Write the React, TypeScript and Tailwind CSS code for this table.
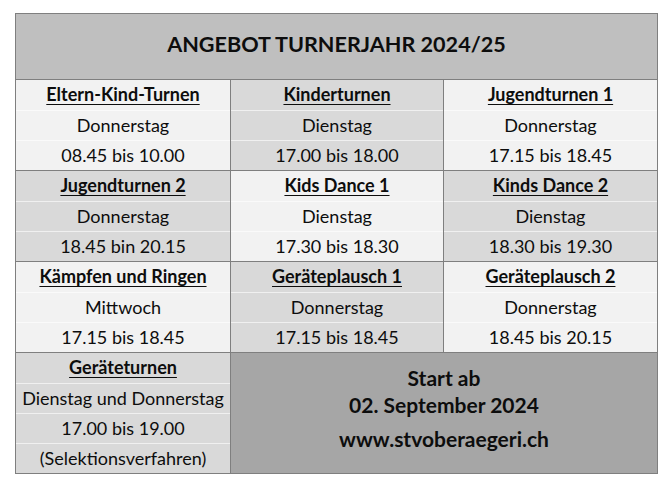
type Course = {
  name: string;
  day: string;
  time: string;
  tone: "light" | "dark";
};

const blocks: Course[][] = [
  [
    { name: "Eltern-Kind-Turnen", day: "Donnerstag", time: "08.45 bis 10.00", tone: "light" },
    { name: "Kinderturnen", day: "Dienstag", time: "17.00 bis 18.00", tone: "dark" },
    { name: "Jugendturnen 1", day: "Donnerstag", time: "17.15 bis 18.45", tone: "light" },
  ],
  [
    { name: "Jugendturnen 2", day: "Donnerstag", time: "18.45 bin 20.15", tone: "dark" },
    { name: "Kids Dance 1", day: "Dienstag", time: "17.30 bis 18.30", tone: "light" },
    { name: "Kinds Dance 2", day: "Dienstag", time: "18.30 bis 19.30", tone: "dark" },
  ],
  [
    { name: "Kämpfen und Ringen", day: "Mittwoch", time: "17.15 bis 18.45", tone: "light" },
    { name: "Geräteplausch 1", day: "Donnerstag", time: "17.15 bis 18.45", tone: "dark" },
    { name: "Geräteplausch 2", day: "Donnerstag", time: "18.45 bis 20.15", tone: "light" },
  ],
];

const Line = ({ children, first }: { children: React.ReactNode; first?: boolean }) => (
  <div
    className={
      first
        ? "h-[30px] pb-[2px] flex items-center justify-center"
        : "h-[30px] pb-[2px] flex items-center justify-center border-t border-white/60"
    }
  >
    {children}
  </div>
);

const Title = ({ children }: { children: React.ReactNode }) => (
  <span className="font-bold underline decoration-1 underline-offset-[3px]">{children}</span>
);

const CourseCell = ({ course, last }: { course: Course; last: boolean }) => (
  <div
    className={`${course.tone === "light" ? "bg-[#f2f2f2]" : "bg-[#d9d9d9]"} ${
      last ? "" : "border-r border-[#7f7f7f]"
    } border-b border-[#7f7f7f]`}
  >
    <Line first>
      <Title>{course.name}</Title>
    </Line>
    <Line>{course.day}</Line>
    <Line>{course.time}</Line>
  </div>
);

export default function App() {
  return (
    <div className="min-h-[486px] bg-white pt-[13px] pl-[15px]">
      <div
        className="w-[643px] border border-[#7f7f7f] text-[#0d0d0d] text-[18px] leading-none"
        style={{ fontFamily: "Lato, 'Noto Sans', sans-serif" }}
      >
        <div className="h-[66px] bg-[#bfbfbf] border-b border-[#7f7f7f] flex items-center justify-center pb-[3px]">
          <h1 className="font-bold text-[21.6px]">ANGEBOT TURNERJAHR 2024/25</h1>
        </div>

        {blocks.map((row, i) => (
          <div key={i} className="grid grid-cols-[215px_213px_213px]">
            {row.map((c, j) => (
              <CourseCell key={c.name} course={c} last={j === 2} />
            ))}
          </div>
        ))}

        <div className="grid grid-cols-[215px_426px]">
          <div className="bg-[#d9d9d9] border-r border-[#7f7f7f]">
            <Line first>
              <Title>Geräteturnen</Title>
            </Line>
            <Line>Dienstag und Donnerstag</Line>
            <Line>17.00 bis 19.00</Line>
            <Line>(Selektionsverfahren)</Line>
          </div>
          <div className="bg-[#a6a6a6] flex flex-col items-center font-bold text-[21px] pt-[11px]">
            <div className="h-[27px] flex items-center">Start ab</div>
            <div className="h-[27px] flex items-center">02. September 2024</div>
            <div className="h-[27px] mt-[7px] flex items-center">www.stvoberaegeri.ch</div>
          </div>
        </div>
      </div>
    </div>
  );
}
